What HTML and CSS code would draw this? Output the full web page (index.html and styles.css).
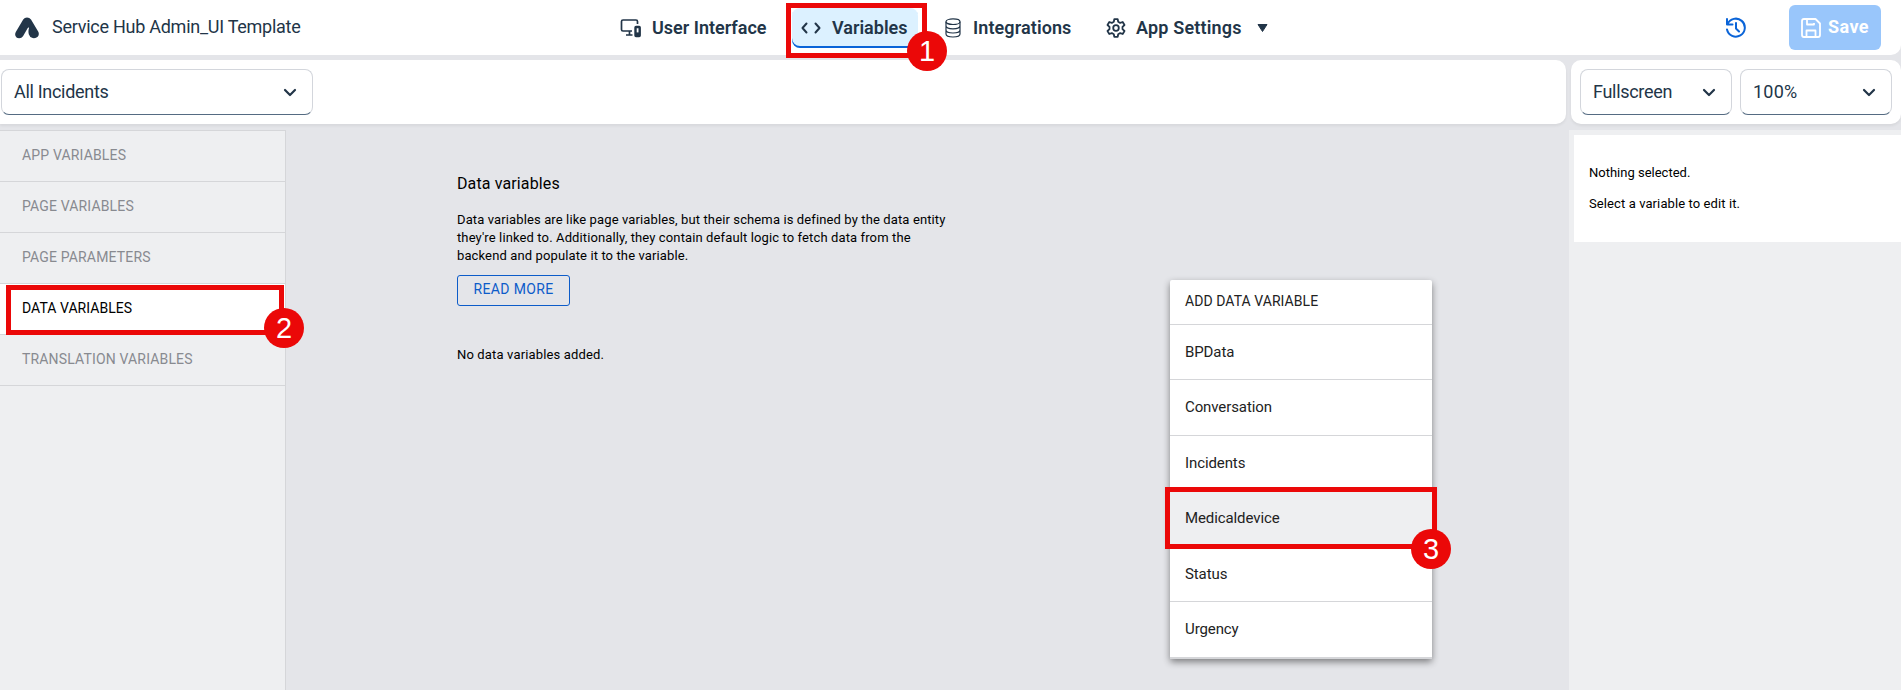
FILE: index.html
```html
<!DOCTYPE html>
<html lang="en">
<head>
<meta charset="utf-8">
<title>Service Hub Admin_UI Template</title>
<link rel="stylesheet" href="styles.css">
</head>
<body>
<div class="app">
  <header class="topbar">
    <div class="brand">
      <svg class="logo" width="24" height="22" viewBox="0 0 24 22"><path d="M8.200 2.600Q9.600 .4 12 .4Q14.500 .4 16 2.600L23.300 14.800Q24.600 17.600 22.700 19.800Q20.800 21.600 17.700 21.100Q14.600 20.100 13.800 17.200Q13 14.400 14 11Q14.200 10.200 13.400 10.500Q12.600 11 11.900 12.500L8 19.300Q6.600 21.400 4 21.300Q1.400 21 .5 18.900Q-.3 17 .8 14.900Z" fill="#223548"/></svg>
      <span class="app-title">Service Hub Admin_UI Template</span>
    </div>
    <nav class="nav">
      <a class="nav-item nav-ui">
        <svg width="22" height="20" viewBox="0 0 22 20" fill="none" stroke="#223548" stroke-width="1.700"><path d="M17.500 6V3.500Q17.500 2 16 2H3Q1.500 2 1.500 3.500V11.500Q1.500 13 3 13H12"/><path d="M9.500 13V17M6 17H12.500"/><rect x="15.500" y="9" width="4.200" height="9" rx=".5" stroke-width="2.400"/><path d="M16 15.700H19" stroke-width="2.600"/></svg>
        <span>User Interface</span></a>
      <a class="nav-item nav-vars active">
        <svg width="20" height="14" viewBox="0 0 20 14" fill="none" stroke="#223548" stroke-width="2" stroke-linecap="round" stroke-linejoin="round"><path d="M5.500 2.500L1.500 7L5.500 11.500M14.500 2.500L18.500 7L14.500 11.500"/></svg>
        <span>Variables</span></a>
      <a class="nav-item nav-int">
        <svg width="16" height="20" viewBox="0 0 16 20" fill="none" stroke="#223548" stroke-width="1.200"><ellipse cx="8" cy="3.700" rx="7" ry="2.800"/><path d="M1 3.700V16C1 20 15 20 15 16V3.700M1 7.800C1 11.800 15 11.800 15 7.800M1 12C1 16 15 16 15 12"/></svg>
        <span>Integrations</span></a>
      <a class="nav-item nav-set">
        <svg width="20" height="20" viewBox="0 0 20 20" fill="none" stroke="#223548" stroke-width="1.800" stroke-linejoin="round"><path d="M8.300 1.200H11.700L12.200 3.700L14.200 4.900L16.700 4L18.500 7L16.500 8.800V11.200L18.500 13L16.700 16L14.200 15.100L12.200 16.300L11.700 18.800H8.300L7.800 16.300L5.800 15.100L3.300 16L1.500 13L3.500 11.200V8.800L1.500 7L3.300 4L5.800 4.900L7.800 3.700Z"/><circle cx="10" cy="10" r="2.800"/></svg>
        <span>App Settings</span>
        <svg class="caret" width="11" height="8" viewBox="0 0 11 8"><path d="M1 .5H10L5.500 7.500Z" fill="#223548" stroke="#223548" stroke-linejoin="round"/></svg></a>
    </nav>
    <svg class="history" width="22" height="22" viewBox="0 0 22 22" fill="none" stroke="#0a64d8" stroke-width="2" stroke-linecap="round" stroke-linejoin="round"><path d="M2 2V7.500H7.500M2.500 7.200A9 9 0 1 1 2 12.500M11 6V11.500L14 14.500"/></svg>
    <button class="save"><svg width="20" height="20" viewBox="0 0 20 20" fill="none" stroke="#fff" stroke-width="1.800" stroke-linejoin="round"><path d="M3 1H14.500L19 5.500V17Q19 19 17 19H3Q1 19 1 17V3Q1 1 3 1ZM6 1V6.500H13V5M5.500 19V12.500H14.500V19"/></svg><span>Save</span></button>
  </header>

  <div class="toolbar">
    <div class="panel page-panel"><div class="select page-select"><span>All Incidents</span><svg class="chev" width="14" height="9" viewBox="0 0 14 9"><path d="M2 2L7 7L12 2"/></svg></div></div>
    <div class="panel view-panel">
      <div class="select view-select"><span>Fullscreen</span><svg class="chev" width="14" height="9" viewBox="0 0 14 9"><path d="M2 2L7 7L12 2"/></svg></div>
      <div class="select view-select"><span class="zoom-value">100%</span><svg class="chev" width="14" height="9" viewBox="0 0 14 9"><path d="M2 2L7 7L12 2"/></svg></div>
    </div>
  </div>

  <main class="workspace">
    <aside class="sidebar">
      <div class="side-item">APP VARIABLES</div>
      <div class="side-item">PAGE VARIABLES</div>
      <div class="side-item">PAGE PARAMETERS</div>
      <div class="side-item selected">DATA VARIABLES</div>
      <div class="side-item">TRANSLATION VARIABLES</div>
    </aside>
    <section class="content">
      <h1>Data variables</h1>
      <p class="desc">Data variables are like page variables, but their schema is defined by the data entity<br>they're linked to. Additionally, they contain default logic to fetch data from the<br>backend and populate it to the variable.</p>
      <button class="read-more">READ MORE</button>
      <p class="empty">No data variables added.</p>
    </section>
    <aside class="inspector"><div class="inspector-card"><p>Nothing selected.</p><p class="hint">Select a variable to edit it.</p></div></aside>
  </main>

  <div class="menu">
    <div class="menu-head">ADD DATA VARIABLE</div>
    <div class="menu-item">BPData</div>
    <div class="menu-item">Conversation</div>
    <div class="menu-item">Incidents</div>
    <div class="menu-item hover">Medicaldevice</div>
    <div class="menu-item">Status</div>
    <div class="menu-item">Urgency</div>
  </div>

  <div class="mark mark-1"><span class="badge">1</span></div>
  <div class="mark mark-2"><span class="badge">2</span></div>
  <div class="mark mark-3"><span class="badge">3</span></div>
</div>
</body>
</html>
```
FILE: styles.css
```css
* { box-sizing: border-box; }
body { margin: 0; font-family: Roboto, "Liberation Sans", sans-serif; color: #000; }
h1, p { margin: 0; font-weight: 400; }
button { font-family: inherit; }
.app { position: relative; width: 1901px; height: 690px; overflow: hidden; background: #e4e5e9; display: flex; flex-direction: column; }

.topbar { height: 55px; flex: none; background: #fff; border-radius: 0 0 10px 0; display: flex; align-items: center; }
.brand { width: 620px; display: flex; align-items: center; padding-left: 15px; }
.logo { margin-top: 1px; }
.app-title { margin: -2px 0 0 13px; font-size: 18px; letter-spacing: -.26px; color: #223548; white-space: nowrap; }
.nav { display: flex; align-items: center; width: 1105px; }
.nav-item { display: flex; align-items: center; height: 40px; font-size: 18px; font-weight: 600; color: #223548; white-space: nowrap; }
.nav-ui { width: 172px; gap: 10px; }
.nav-vars { width: 126px; padding-left: 9px; gap: 11px; border-radius: 8px; }
.nav-vars.active { background: #dcf1ff; box-shadow: inset 0 -2px #0a64d8; }
.nav-int { width: 162px; margin-left: 27px; gap: 12px; letter-spacing: .1px; }
.nav-set { gap: 10px; margin-left: -1px; letter-spacing: .18px; }
.caret { margin-left: 5px; }
.save { width: 92px; height: 45px; margin-left: 42px; border: 0; border-radius: 6px; background: #99c6fb; color: #fff; display: flex; align-items: center; gap: 7px; padding: 0 0 0 12px; font-size: 18px; font-weight: 700; letter-spacing: .4px; }
.save span { margin-top: -2px; }

.toolbar { height: 64px; margin-top: 5px; flex: none; display: flex; gap: 5px; }
.panel { background: #fff; box-shadow: 0 2px 3px rgba(0,0,0,.06); display: flex; align-items: center; }
.page-panel { width: 1566px; border-radius: 0 10px 10px 0; padding-left: 1px; }
.view-panel { width: 330px; border-radius: 10px; padding: 0 9px; gap: 8px; }
.select { height: 46px; border: 1px solid #d3d6dc; border-bottom: 1px solid #556b82; border-radius: 8px; display: flex; align-items: center; justify-content: space-between; padding: 0 15px 1px 12px; font-size: 18px; letter-spacing: -.3px; color: #223548; }
.page-select { width: 312px; }
.view-select { width: 152px; }
.zoom-value { letter-spacing: .2px; }
.chev { margin-top: 2px; fill: none; stroke: #223548; stroke-width: 2.200; stroke-linecap: round; stroke-linejoin: round; }

.workspace { flex: 1; display: flex; margin-top: 6px; }
.sidebar { width: 286px; background: #eeeff1; border-top: 1px solid #d5d6d9; border-right: 1px solid #d5d6d9; }
.side-item { height: 51px; border-bottom: 1px solid #d5d6d9; padding-left: 22px; font-size: 14px; letter-spacing: .16px; line-height: 49px; color: #888a90; white-space: nowrap; }
.side-item.selected { background: #fff; color: #000; letter-spacing: .05px; }
.content { width: 1283px; padding: 44px 0 0 171px; }
.content h1 { font-size: 16px; line-height: 20px; letter-spacing: .12px; }
.desc { margin-top: 17px; font-size: 13px; letter-spacing: .12px; line-height: 18px; white-space: nowrap; }
.read-more { display: block; width: 113px; height: 31px; margin-top: 10px; padding: 0 0 3px; border: 1px solid #0d5cc9; border-radius: 3px; background: transparent; color: #0d5cc9; font-size: 14px; letter-spacing: .35px; }
.empty { margin-top: 40px; font-size: 13px; letter-spacing: .15px; line-height: 18px; }
.inspector { width: 332px; background: #eeeff1; padding: 5px 0 0 5px; }
.inspector-card { height: 107px; background: #fff; padding: 29px 15px; font-size: 13px; line-height: 18px; }
.hint { margin-top: 13px; letter-spacing: .1px; }

.menu { position: absolute; left: 1170px; top: 280px; width: 262px; background: #fff; border-radius: 2px; box-shadow: 0 3px 7px rgba(0,0,0,.45); color: #222; }
.menu-head { height: 45px; border-bottom: 1px solid #d5d6d9; padding-left: 15px; font-size: 14px; letter-spacing: .06px; line-height: 42px; }
.menu-item { height: 55.400px; border-bottom: 1px solid #d5d6d9; padding-left: 15px; font-size: 15px; letter-spacing: -.1px; line-height: 55px; }
.menu-item.hover { background: #eeeff1; }
.menu-item:last-child { height: 57px; border-bottom-width: 2px; }

.mark { position: absolute; border: 5px solid #eb0808; }
.mark-1 { left: 786px; top: 3px; width: 141px; height: 55px; }
.mark-2 { left: 6px; top: 285px; width: 278px; height: 50px; }
.mark-3 { left: 1165px; top: 487px; width: 272px; height: 62px; }
.badge { position: absolute; right: -25px; bottom: -18px; width: 40px; height: 40px; border-radius: 50%; background: #eb0808; color: #fff; font: 29px/40px "Liberation Sans", sans-serif; text-align: center; }
.mark-3 .badge { right: -19px; bottom: -25px; }
```
